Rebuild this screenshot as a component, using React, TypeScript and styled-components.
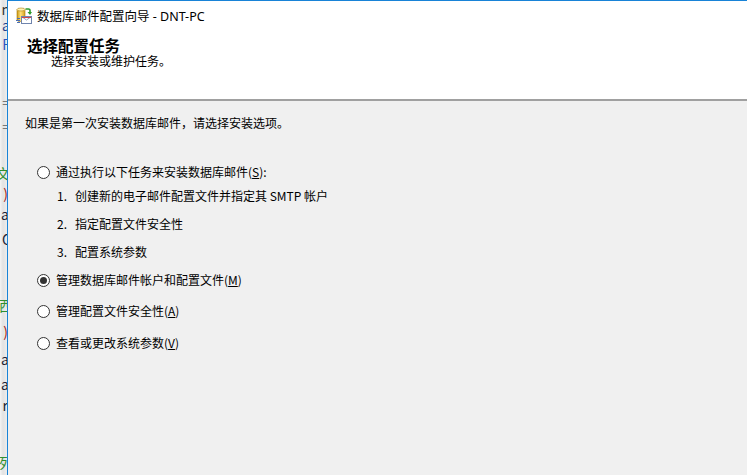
import React from 'react';
import styled, { createGlobalStyle } from 'styled-components';

const GlobalStyle = createGlobalStyle`
  html, body {
    margin: 0;
    padding: 0;
    background: #fff;
  }
  body {
    font-family: "Noto Sans CJK SC", "Noto Sans", sans-serif;
    color: #000;
  }
`;

const Screen = styled.div`
  display: flex;
  width: 747px;
  height: 475px;
  overflow: hidden;
`;

// bit of the editor window lying behind the dialog
const BackStrip = styled.div`
  width: 7px;
  flex: none;
  display: flex;
  flex-direction: column;
  background: linear-gradient(to right, #f4f4f4, #e2e2e2 3px, #ededed);
  overflow: hidden;
`;

const StripLine = styled.div<{ $h: number; $color: string; $shift?: number }>`
  height: ${p => p.$h}px;
  flex: none;
  display: flex;
  justify-content: flex-end;
  align-items: center;
  font-family: "Noto Sans CJK SC", "DejaVu Sans", sans-serif;
  font-size: 14px;
  color: ${p => p.$color};
  white-space: nowrap;

  span {
    margin-right: ${p => p.$shift ?? -3}px;
  }
`;

const Window = styled.div`
  flex: 1;
  display: flex;
  flex-direction: column;
  border-left: 1px solid #1883d7;
  border-top: 1px solid #1883d7;
  background: #f0f0f0;
  min-width: 0;
`;

const TitleBar = styled.div`
  height: 29px;
  flex: none;
  display: flex;
  align-items: center;
  gap: 5px;
  padding-left: 8px;
  background: #fff;
  font-family: "Noto Sans", "Noto Sans CJK SC", sans-serif;
  font-size: 12.5px;
  color: #000;
`;

const Header = styled.div`
  height: 69px;
  flex: none;
  background: #fff;
  padding: 6px 0 0 19px;
  box-sizing: border-box;
`;

const HeaderTitle = styled.div`
  font-size: 15.5px;
  font-weight: bold;
  line-height: 18px;
`;

const HeaderSub = styled.div`
  font-size: 12px;
  line-height: 14px;
  margin-left: 24px;
`;

const Separator = styled.div`
  height: 2px;
  flex: none;
  background: #a0a0a0;
`;

const Body = styled.div`
  flex: 1;
  padding: 14px 0 0 17px;
  font-size: 12px;
`;

const Intro = styled.div`
  line-height: 16px;
`;

const OptionRow = styled.label<{ $top: number }>`
  display: flex;
  align-items: center;
  gap: 6px;
  height: 16px;
  margin: ${p => p.$top}px 0 0 12px;
  line-height: 16px;
`;

const Radio = styled.span<{ $checked?: boolean }>`
  width: 13px;
  height: 13px;
  box-sizing: border-box;
  border: 1px solid #333;
  border-radius: 50%;
  background: #fff;
  display: flex;
  align-items: center;
  justify-content: center;
  flex: none;

  &::after {
    content: '';
    width: 7px;
    height: 7px;
    border-radius: 50%;
    background: #333;
    display: ${p => (p.$checked ? 'block' : 'none')};
  }
`;

const StepRow = styled.div<{ $top: number }>`
  display: flex;
  height: 16px;
  line-height: 16px;
  margin: ${p => p.$top}px 0 0 32px;
`;

const StepNum = styled.span`
  width: 18px;
  flex: none;
`;

const AppIcon = () => (
  <svg width="16" height="17" viewBox="0 0 16 17">
    <defs>
      <linearGradient id="cyl" x1="0" x2="1" y1="0" y2="0">
        <stop offset="0" stopColor="#c8950e" />
        <stop offset="0.45" stopColor="#ffe07a" />
        <stop offset="1" stopColor="#d6a11c" />
      </linearGradient>
    </defs>
    <path d="M1 2.5 V13 A4 1.5 0 0 0 9 13 V2.5 Z" fill="url(#cyl)" stroke="#a8780a" strokeWidth="0.6" />
    <ellipse cx="5" cy="2.5" rx="4" ry="1.5" fill="#fff3b0" stroke="#a8780a" strokeWidth="0.6" />
    <path d="M9.5 2 H12.5 A1.5 1.5 0 0 1 14 3.5 V5.5" stroke="#2c9a2c" strokeWidth="1.6" fill="none" />
    <path d="M11.5 5 L14 8 L16 5 Z" fill="#2c9a2c" />
    <rect x="5.5" y="9.5" width="10" height="7" fill="#fff" stroke="#6f84ad" />
    <path d="M5.5 9.5 L10.5 13 L15.5 9.5" stroke="#6f84ad" fill="none" strokeWidth="0.8" />
    <rect x="6" y="10" width="9" height="1" fill="#d24848" />
    <path d="M1 11.5 H4 M0 13.5 H4 M1 15.5 H4" stroke="#4a6fb5" strokeWidth="1" />
  </svg>
);

const strip = [
  { h: 2, t: '', c: '#000' },
  { h: 14, t: 'n', c: '#333' },
  { h: 18, t: 'a', c: '#1f3f8f' },
  { h: 20, t: 'F', c: '#2b55c0' },
  { h: 40, t: '', c: '#000' },
  { h: 16, t: '=', c: '#777' },
  { h: 8, t: '', c: '#000' },
  { h: 16, t: '=', c: '#777' },
  { h: 30, t: '', c: '#000' },
  { h: 18, t: '文', c: '#2f8f2f' },
  { h: 22, t: ')', c: '#a01818', s: -1 },
  { h: 20, t: 'a', c: '#223', s: -2 },
  { h: 30, t: 'C', c: '#223', s: -4 },
  { h: 40, t: '', c: '#000' },
  { h: 22, t: '西', c: '#2f8f2f', s: -6 },
  { h: 30, t: ')', c: '#a01818', s: -1 },
  { h: 26, t: 'a', c: '#223', s: -2 },
  { h: 24, t: 'a', c: '#223', s: -2 },
  { h: 18, t: 'r', c: '#223', s: -1 },
  { h: 38, t: '', c: '#000' },
  { h: 20, t: '列', c: '#2f8f2f', s: -6 },
  { h: 20, t: 'P', c: '#8a2a7a', s: -4 },
];

export default function App() {
  return (
    <Screen>
      <GlobalStyle />
      <BackStrip>
        {strip.map((l, i) => (
          <StripLine key={i} $h={l.h} $color={l.c} $shift={(l as any).s}>
            <span>{l.t}</span>
          </StripLine>
        ))}
      </BackStrip>
      <Window>
        <TitleBar>
          <AppIcon />
          <span>数据库邮件配置向导 - DNT-PC</span>
        </TitleBar>
        <Header>
          <HeaderTitle>选择配置任务</HeaderTitle>
          <HeaderSub>选择安装或维护任务。</HeaderSub>
        </Header>
        <Separator />
        <Body>
          <Intro>如果是第一次安装数据库邮件，请选择安装选项。</Intro>
          <OptionRow $top={33}>
            <Radio />
            <span>通过执行以下任务来安装数据库邮件(<u>S</u>):</span>
          </OptionRow>
          <StepRow $top={8}>
            <StepNum>1.</StepNum>
            <span>创建新的电子邮件配置文件并指定其 SMTP 帐户</span>
          </StepRow>
          <StepRow $top={12}>
            <StepNum>2.</StepNum>
            <span>指定配置文件安全性</span>
          </StepRow>
          <StepRow $top={12}>
            <StepNum>3.</StepNum>
            <span>配置系统参数</span>
          </StepRow>
          <OptionRow $top={12}>
            <Radio $checked />
            <span>管理数据库邮件帐户和配置文件(<u>M</u>)</span>
          </OptionRow>
          <OptionRow $top={15}>
            <Radio />
            <span>管理配置文件安全性(<u>A</u>)</span>
          </OptionRow>
          <OptionRow $top={16}>
            <Radio />
            <span>查看或更改系统参数(<u>V</u>)</span>
          </OptionRow>
        </Body>
      </Window>
    </Screen>
  );
}
